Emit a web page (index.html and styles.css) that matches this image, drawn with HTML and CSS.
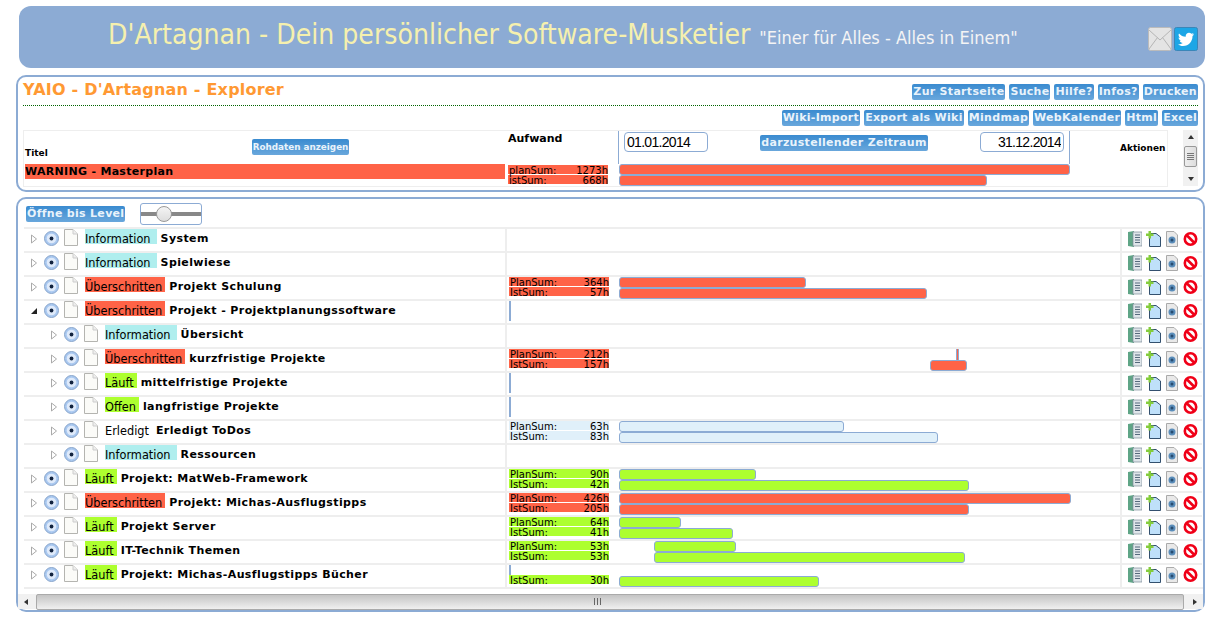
FILE: index.html
```html
<!DOCTYPE html>
<html lang="de">
<head>
    <meta charset="UTF-8">
    <title>YAIO - D'Artagnan - Explorer</title>
    <link rel="stylesheet" href="styles.css">
</head>
<body>

    <!-- Icons -->
    <svg class="sprite" width="0" height="0">
        <symbol id="i-closed" viewBox="0 0 8 10"><path d="M1.500 1 L6.500 5 L1.500 9 Z" fill="#fff" stroke="#aaa"/></symbol>
        <symbol id="i-open" viewBox="0 0 8 10"><path d="M1 8 L7 8 L7 2 Z" fill="#222"/></symbol>
        <symbol id="i-radio" viewBox="0 0 15 15"><circle cx="7.500" cy="7.500" r="7" fill="#a9c8f0" stroke="#8aa6cc"/><circle cx="7.500" cy="7.500" r="4.800" fill="#dfeafa"/><circle cx="7.500" cy="7.500" r="1.900" fill="#12233f"/></symbol>
        <symbol id="i-doc" viewBox="0 0 14 17"><path d="M.5 .5 H9 L13.500 5 V16.500 H.5 Z" fill="#fbfbf8" stroke="#b4b4b0"/><path d="M9 .5 V5 H13.500" fill="#eee" stroke="#ccc"/></symbol>
        <symbol id="i-book" viewBox="0 0 14 16"><path d="M0 1 L6 0 V16 L0 15 Z" fill="#5fa586"/><rect x="5" y="1" width="9" height="14" fill="#dfe5ea" stroke="#7d8c99" stroke-width=".7"/><path d="M7 4 H12 M7 6.500 H12 M7 9 H12 M7 11.500 H12" stroke="#55697c"/></symbol>
        <symbol id="i-new" viewBox="0 0 15 16"><path d="M3.500 2.500 H10 L14.500 6 V15.500 H3.500 Z" fill="#bfe0fa" stroke="#33506e"/><path d="M2.500 0 H5 V2.500 H7.500 V5 H5 V7.500 H2.500 V5 H0 V2.500 H2.500 Z" fill="#84cc3c"/></symbol>
        <symbol id="i-eye" viewBox="0 0 12 16"><path d="M.5 .5 H8 L11.500 4 V15.500 H.5 Z" fill="#e9e9e9" stroke="#aaa"/><circle cx="6" cy="9" r="3.500" fill="#5a8dba"/><circle cx="6" cy="9" r="1.500" fill="#274b6f"/></symbol>
        <symbol id="i-stop" viewBox="0 0 15 15"><circle cx="7.500" cy="7.500" r="5.700" fill="#fff" stroke="#f00018" stroke-width="2.600"/><path d="M3.500 3.500 L11.500 11.500" stroke="#f00018" stroke-width="2.600"/></symbol>
    </svg>

    <header class="site-head">
        <h1 class="site-title">D'Artagnan - Dein persönlicher Software-Musketier</h1>
        <span class="site-claim">"Einer für Alles - Alles in Einem"</span>
        <span class="site-icons">
            <svg class="social" viewBox="0 0 24 24"><rect x=".5" y=".5" width="23" height="23" rx="2" fill="#e4e4e4" stroke="#bbb"/><path d="M1 3 L12 13 L23 3 M1 22 L9.500 10.500 M23 22 L14.500 10.500" fill="none" stroke="#b5b5b5"/></svg>
            <svg class="social" viewBox="0 0 24 24"><rect x=".5" y=".5" width="23" height="23" rx="2" fill="#1da6e6" stroke="#3b86b8"/><path d="M20 7.200 c-.6.300-1.200.400-1.900.500 .7-.400 1.200-1 1.400-1.800 -.6.400-1.300.600-2.100.800 -.6-.600-1.500-1-2.400-1 -1.800 0-3.300 1.500-3.300 3.300 0 .300 0 .500.100.800 -2.700-.100-5.100-1.400-6.800-3.400 -.3.500-.4 1.100-.4 1.700 0 1.100.600 2.100 1.500 2.700 -.5 0-1-.200-1.500-.400 0 1.600 1.100 2.900 2.600 3.200 -.5.100-1 .200-1.500.100 .4 1.300 1.600 2.200 3.100 2.300 -1.400 1.100-3.200 1.600-4.900 1.400 1.500.900 3.200 1.500 5.100 1.500 6.100 0 9.500-5.100 9.500-9.500 v-.400 c.600-.500 1.200-1.100 1.600-1.800 z" fill="#fff"/></svg>
        </span>
    </header>

    <section class="box box-top">
        <div class="top-line">
            <h2 class="page-title">YAIO - D'Artagnan - Explorer</h2>
            <nav class="btn-row">
                <a class="btn">Zur Startseite</a>
                <a class="btn">Suche</a>
                <a class="btn">Hilfe?</a>
                <a class="btn">Infos?</a>
                <a class="btn">Drucken</a>
            </nav>
        </div>
        <nav class="btn-row btn-row-second">
            <a class="btn">Wiki-Import</a>
            <a class="btn">Export als Wiki</a>
            <a class="btn">Mindmap</a>
            <a class="btn">WebKalender</a>
            <a class="btn">Html</a>
            <a class="btn">Excel</a>
        </nav>

        <div class="master-wrap">
            <div class="master">
                <div class="master-head">
                    <div class="mh-title">
                        <span class="mh-label">Titel</span>
                        <a class="btn btn-small">Rohdaten anzeigen</a>
                    </div>
                    <div class="mh-sum">Aufwand</div>
                    <div class="mh-range">
                        <input class="date" type="text" value="01.01.2014">
                        <a class="btn">darzustellender Zeitraum</a>
                        <input class="date date-end" type="text" value="31.12.2014">
                    </div>
                    <div class="mh-actions">Aktionen</div>
                </div>
                <div class="master-body">
                    <div class="mb-title"><span>WARNING - Masterplan</span></div>
                    <div class="sum sum-master">
                        <div class="sum-line"><span>planSum:</span><span>1273h</span></div>
                        <div class="sum-line"><span>istSum:</span><span>668h</span></div>
                    </div>
                    <div class="gantt gantt-master">
                        <div class="bar red" style="margin-left: 0; width: 451px"></div>
                        <div class="bar red" style="margin-left: 0; width: 368px"></div>
                    </div>
                </div>
            </div>
            <div class="scroll-v">
                <span class="arrow-up"></span>
                <span class="thumb-v"></span>
                <span class="arrow-down"></span>
            </div>
        </div>
    </section>

    <section class="box box-tree">
        <div class="tree-tools">
            <a class="btn">Öffne bis Level</a>
            <div class="slider"><span class="knob"></span></div>
        </div>

        <div class="tree">
            <div class="row">
                <div class="name"><svg class="exp"><use href="#i-closed"/></svg><svg class="radio"><use href="#i-radio"/></svg><svg class="doc"><use href="#i-doc"/></svg><span class="status info">Information</span><b>System</b></div>
                <div class="sum"></div>
                <div class="gantt"></div>
                <div class="acts"><svg class="a1"><use href="#i-book"/></svg><svg class="a2"><use href="#i-new"/></svg><svg class="a3"><use href="#i-eye"/></svg><svg class="a4"><use href="#i-stop"/></svg></div>
            </div>
            <div class="row">
                <div class="name"><svg class="exp"><use href="#i-closed"/></svg><svg class="radio"><use href="#i-radio"/></svg><svg class="doc"><use href="#i-doc"/></svg><span class="status info">Information</span><b>Spielwiese</b></div>
                <div class="sum"></div>
                <div class="gantt"></div>
                <div class="acts"><svg class="a1"><use href="#i-book"/></svg><svg class="a2"><use href="#i-new"/></svg><svg class="a3"><use href="#i-eye"/></svg><svg class="a4"><use href="#i-stop"/></svg></div>
            </div>
            <div class="row">
                <div class="name"><svg class="exp"><use href="#i-closed"/></svg><svg class="radio"><use href="#i-radio"/></svg><svg class="doc"><use href="#i-doc"/></svg><span class="status late">Überschritten</span><b>Projekt Schulung</b></div>
                <div class="sum"><div class="sum-line red"><span>PlanSum:</span><span>364h</span></div><div class="sum-line red"><span>IstSum:</span><span>57h</span></div></div>
                <div class="gantt"><div class="bar red" style="margin-left: 0; width: 187px"></div><div class="bar red" style="margin-left: 0; width: 308px"></div></div>
                <div class="acts"><svg class="a1"><use href="#i-book"/></svg><svg class="a2"><use href="#i-new"/></svg><svg class="a3"><use href="#i-eye"/></svg><svg class="a4"><use href="#i-stop"/></svg></div>
            </div>
            <div class="row">
                <div class="name"><svg class="exp"><use href="#i-open"/></svg><svg class="radio"><use href="#i-radio"/></svg><svg class="doc"><use href="#i-doc"/></svg><span class="status late">Überschritten</span><b>Projekt - Projektplanungssoftware</b></div>
                <div class="sum"><span class="tick"></span></div>
                <div class="gantt"></div>
                <div class="acts"><svg class="a1"><use href="#i-book"/></svg><svg class="a2"><use href="#i-new"/></svg><svg class="a3"><use href="#i-eye"/></svg><svg class="a4"><use href="#i-stop"/></svg></div>
            </div>
            <div class="row">
                <div class="name sub"><svg class="exp"><use href="#i-closed"/></svg><svg class="radio"><use href="#i-radio"/></svg><svg class="doc"><use href="#i-doc"/></svg><span class="status info">Information</span><b>Übersicht</b></div>
                <div class="sum"></div>
                <div class="gantt"></div>
                <div class="acts"><svg class="a1"><use href="#i-book"/></svg><svg class="a2"><use href="#i-new"/></svg><svg class="a3"><use href="#i-eye"/></svg><svg class="a4"><use href="#i-stop"/></svg></div>
            </div>
            <div class="row">
                <div class="name sub"><svg class="exp"><use href="#i-closed"/></svg><svg class="radio"><use href="#i-radio"/></svg><svg class="doc"><use href="#i-doc"/></svg><span class="status late">Überschritten</span><b>kurzfristige Projekte</b></div>
                <div class="sum"><div class="sum-line red"><span>PlanSum:</span><span>212h</span></div><div class="sum-line red"><span>IstSum:</span><span>157h</span></div></div>
                <div class="gantt"><div class="bar bar-thin red" style="margin-left: 337px; width: 3px"></div><div class="bar red" style="margin-left: 311px; width: 37px"></div></div>
                <div class="acts"><svg class="a1"><use href="#i-book"/></svg><svg class="a2"><use href="#i-new"/></svg><svg class="a3"><use href="#i-eye"/></svg><svg class="a4"><use href="#i-stop"/></svg></div>
            </div>
            <div class="row">
                <div class="name sub"><svg class="exp"><use href="#i-closed"/></svg><svg class="radio"><use href="#i-radio"/></svg><svg class="doc"><use href="#i-doc"/></svg><span class="status run">Läuft</span><b>mittelfristige Projekte</b></div>
                <div class="sum"><span class="tick"></span></div>
                <div class="gantt"></div>
                <div class="acts"><svg class="a1"><use href="#i-book"/></svg><svg class="a2"><use href="#i-new"/></svg><svg class="a3"><use href="#i-eye"/></svg><svg class="a4"><use href="#i-stop"/></svg></div>
            </div>
            <div class="row">
                <div class="name sub"><svg class="exp"><use href="#i-closed"/></svg><svg class="radio"><use href="#i-radio"/></svg><svg class="doc"><use href="#i-doc"/></svg><span class="status run">Offen</span><b>langfristige Projekte</b></div>
                <div class="sum"><span class="tick"></span></div>
                <div class="gantt"></div>
                <div class="acts"><svg class="a1"><use href="#i-book"/></svg><svg class="a2"><use href="#i-new"/></svg><svg class="a3"><use href="#i-eye"/></svg><svg class="a4"><use href="#i-stop"/></svg></div>
            </div>
            <div class="row">
                <div class="name sub"><svg class="exp"><use href="#i-closed"/></svg><svg class="radio"><use href="#i-radio"/></svg><svg class="doc"><use href="#i-doc"/></svg><span class="status done">Erledigt</span><b>Erledigt ToDos</b></div>
                <div class="sum"><div class="sum-line pale"><span>PlanSum:</span><span>63h</span></div><div class="sum-line pale"><span>IstSum:</span><span>83h</span></div></div>
                <div class="gantt"><div class="bar pale" style="margin-left: 0; width: 225px"></div><div class="bar pale" style="margin-left: 0; width: 319px"></div></div>
                <div class="acts"><svg class="a1"><use href="#i-book"/></svg><svg class="a2"><use href="#i-new"/></svg><svg class="a3"><use href="#i-eye"/></svg><svg class="a4"><use href="#i-stop"/></svg></div>
            </div>
            <div class="row">
                <div class="name sub"><svg class="exp"><use href="#i-closed"/></svg><svg class="radio"><use href="#i-radio"/></svg><svg class="doc"><use href="#i-doc"/></svg><span class="status info">Information</span><b>Ressourcen</b></div>
                <div class="sum"></div>
                <div class="gantt"></div>
                <div class="acts"><svg class="a1"><use href="#i-book"/></svg><svg class="a2"><use href="#i-new"/></svg><svg class="a3"><use href="#i-eye"/></svg><svg class="a4"><use href="#i-stop"/></svg></div>
            </div>
            <div class="row">
                <div class="name"><svg class="exp"><use href="#i-closed"/></svg><svg class="radio"><use href="#i-radio"/></svg><svg class="doc"><use href="#i-doc"/></svg><span class="status run">Läuft</span><b>Projekt: MatWeb-Framework</b></div>
                <div class="sum"><div class="sum-line green"><span>PlanSum:</span><span>90h</span></div><div class="sum-line green"><span>IstSum:</span><span>42h</span></div></div>
                <div class="gantt"><div class="bar green" style="margin-left: 0; width: 137px"></div><div class="bar green" style="margin-left: 0; width: 350px"></div></div>
                <div class="acts"><svg class="a1"><use href="#i-book"/></svg><svg class="a2"><use href="#i-new"/></svg><svg class="a3"><use href="#i-eye"/></svg><svg class="a4"><use href="#i-stop"/></svg></div>
            </div>
            <div class="row">
                <div class="name"><svg class="exp"><use href="#i-closed"/></svg><svg class="radio"><use href="#i-radio"/></svg><svg class="doc"><use href="#i-doc"/></svg><span class="status late">Überschritten</span><b>Projekt: Michas-Ausflugstipps</b></div>
                <div class="sum"><div class="sum-line red"><span>PlanSum:</span><span>426h</span></div><div class="sum-line red"><span>IstSum:</span><span>205h</span></div></div>
                <div class="gantt"><div class="bar red" style="margin-left: 0; width: 452px"></div><div class="bar red" style="margin-left: 0; width: 350px"></div></div>
                <div class="acts"><svg class="a1"><use href="#i-book"/></svg><svg class="a2"><use href="#i-new"/></svg><svg class="a3"><use href="#i-eye"/></svg><svg class="a4"><use href="#i-stop"/></svg></div>
            </div>
            <div class="row">
                <div class="name"><svg class="exp"><use href="#i-closed"/></svg><svg class="radio"><use href="#i-radio"/></svg><svg class="doc"><use href="#i-doc"/></svg><span class="status run">Läuft</span><b>Projekt Server</b></div>
                <div class="sum"><div class="sum-line green"><span>PlanSum:</span><span>64h</span></div><div class="sum-line green"><span>IstSum:</span><span>41h</span></div></div>
                <div class="gantt"><div class="bar green" style="margin-left: 0; width: 62px"></div><div class="bar green" style="margin-left: 0; width: 114px"></div></div>
                <div class="acts"><svg class="a1"><use href="#i-book"/></svg><svg class="a2"><use href="#i-new"/></svg><svg class="a3"><use href="#i-eye"/></svg><svg class="a4"><use href="#i-stop"/></svg></div>
            </div>
            <div class="row">
                <div class="name"><svg class="exp"><use href="#i-closed"/></svg><svg class="radio"><use href="#i-radio"/></svg><svg class="doc"><use href="#i-doc"/></svg><span class="status run">Läuft</span><b>IT-Technik Themen</b></div>
                <div class="sum"><div class="sum-line green"><span>PlanSum:</span><span>53h</span></div><div class="sum-line green"><span>IstSum:</span><span>53h</span></div></div>
                <div class="gantt"><div class="bar green" style="margin-left: 35px; width: 82px"></div><div class="bar green" style="margin-left: 35px; width: 311px"></div></div>
                <div class="acts"><svg class="a1"><use href="#i-book"/></svg><svg class="a2"><use href="#i-new"/></svg><svg class="a3"><use href="#i-eye"/></svg><svg class="a4"><use href="#i-stop"/></svg></div>
            </div>
            <div class="row">
                <div class="name"><svg class="exp"><use href="#i-closed"/></svg><svg class="radio"><use href="#i-radio"/></svg><svg class="doc"><use href="#i-doc"/></svg><span class="status run">Läuft</span><b>Projekt: Michas-Ausflugstipps Bücher</b></div>
                <div class="sum"><span class="tick tick-short"></span><div class="sum-line green"><span>IstSum:</span><span>30h</span></div></div>
                <div class="gantt gantt-bottom"><div class="bar green" style="margin-left: 0; width: 200px"></div></div>
                <div class="acts"><svg class="a1"><use href="#i-book"/></svg><svg class="a2"><use href="#i-new"/></svg><svg class="a3"><use href="#i-eye"/></svg><svg class="a4"><use href="#i-stop"/></svg></div>
            </div>
        </div>

        <div class="scroll-h">
            <span class="arrow-left"></span>
            <span class="thumb-h"><span class="grip"></span></span>
            <span class="arrow-right"></span>
        </div>
    </section>

</body>
</html>
```

FILE: styles.css
```css
body {
    margin: 0;
    background-color: #fff;
    color: #000;
    font-family: "DejaVu Sans", Verdana, sans-serif;
    font-size: 11px;
}
.sprite {
    position: absolute;
}

/* Kopfzeile */
.site-head {
    display: flex;
    align-items: center;
    height: 62px;
    margin: 6px 10px 7px 19px;
    padding-left: 89px;
    background-color: #8cabd4;
    border-radius: 12px;
}
.site-title {
    margin: 0 9px 5px 0;
    font-size: 28.100px;
    font-weight: normal;
    font-stretch: condensed;
    color: #f5f0ae;
}
.site-claim {
    margin-top: 1px;
    font-size: 18px;
    font-stretch: condensed;
    color: #f4f4f4;
}
.site-icons {
    display: flex;
    gap: 2px;
    margin-left: auto;
    margin-right: 7px;
    margin-top: 4px;
}
.social {
    width: 24px;
    height: 24px;
}

/* Boxen */
.box {
    margin: 0 10px 5px 16px;
    border: 2px solid #8cabd4;
    border-radius: 10px;
    background-color: #fff;
}
.box-top {
    height: 113px;
    padding: 0 5px;
}
.box-tree {
    height: 411px;
    padding: 0 0 0 6px;
}

/* Buttons */
.btn {
    display: inline-block;
    height: 16px;
    padding: 0 1px;
    border-radius: 2px;
    background: linear-gradient(#3a8bd0, #69a7dc);
    color: #e9f3fb;
    font-size: 11px;
    font-weight: bold;
    letter-spacing: .3px;
    line-height: 16px;
    white-space: nowrap;
}
.btn-small {
    font-size: 8.800px;
    letter-spacing: 0;
}
.btn-row {
    display: flex;
    justify-content: flex-end;
    gap: 4px;
}
.btn-row-second {
    margin-top: 4px;
}

/* Obere Box */
.top-line {
    display: flex;
    justify-content: space-between;
    align-items: flex-end;
    height: 27px;
    border-bottom: 1px dotted #006400;
    padding-bottom: 1px;
}
.page-title {
    margin: 0 0 5px;
    color: #ff9933;
    font-size: 16px;
    font-weight: bold;
    letter-spacing: .2px;
}
.top-line .btn-row {
    margin-bottom: 4px;
}
.master-wrap {
    display: flex;
    margin-top: 4px;
}
.master {
    width: 1143px;
    height: 55px;
    border: 1px solid #eee;
}
.master-head {
    display: flex;
    height: 33px;
}
.mh-title {
    display: flex;
    width: 484px;
    padding-left: 1px;
    box-sizing: border-box;
}
.mh-label {
    margin-top: 17px;
    font-size: 9px;
    font-weight: bold;
}
.mh-title .btn-small {
    margin: 8px 0 0 204px;
    height: 16px;
    line-height: 16px;
}
.mh-sum {
    width: 110px;
    margin-top: 1px;
    font-size: 11px;
    font-weight: bold;
}
.mh-range {
    display: flex;
    justify-content: space-between;
    align-items: flex-start;
    box-sizing: border-box;
    width: 452px;
    padding: 1px 5px 0;
    border-left: 1px solid #8cabd4;
    border-right: 1px solid #8cabd4;
}
.mh-range .btn {
    margin-top: 3px;
}
.date {
    box-sizing: border-box;
    width: 84px;
    height: 20px;
    padding: 0 2px;
    border: 1px solid #8cabd4;
    border-radius: 4px;
    font-family: "Liberation Sans", sans-serif;
    font-size: 14px;
    letter-spacing: -.7px;
}
.date-end {
    text-align: right;
}
.mh-actions {
    margin: 12px 0 0 50px;
    font-size: 9px;
    font-weight: bold;
}
.master-body {
    display: flex;
}
.mb-title {
    width: 481px;
    margin-right: 2px;
}
.mb-title span {
    display: block;
    height: 15px;
    margin-left: 1px;
    background-color: #ff6347;
    font-weight: bold;
    letter-spacing: .3px;
    line-height: 15px;
}
.scroll-v {
    display: flex;
    flex-direction: column;
    align-items: center;
    justify-content: space-between;
    width: 15px;
    height: 56px;
    margin-left: 15px;
    padding: 5px 0;
    box-sizing: border-box;
    background-color: #f1f1f1;
}
.thumb-v {
    width: 13px;
    height: 21px;
    margin-bottom: 3px;
    border: 1px solid #999;
    border-radius: 2px;
    box-sizing: border-box;
    background:
        repeating-linear-gradient(#777 0 1px, transparent 1px 2px) center / 7px 7px no-repeat,
        linear-gradient(to right, #eee, #ddd);
}
.arrow-up {
    border: 3px solid transparent;
    border-bottom: 4px solid #333;
    border-top: 0;
}
.arrow-down {
    border: 3px solid transparent;
    border-top: 4px solid #333;
    border-bottom: 0;
}

/* Baum */
.tree-tools {
    display: flex;
    align-items: center;
    gap: 15px;
    height: 27px;
    padding: 1px 0 0 2px;
}
.tree-tools .btn {
    margin-top: 1px;
}
.slider {
    position: relative;
    box-sizing: border-box;
    width: 62px;
    height: 22px;
    border: 1px solid #8cabd4;
    border-radius: 3px;
    background: linear-gradient(#fff 8px, #888 8px, #888 12px, #fff 12px);
}
.knob {
    position: absolute;
    left: 15px;
    top: 2px;
    box-sizing: border-box;
    width: 16px;
    height: 16px;
    border: 1px solid #999;
    border-radius: 50%;
    background: linear-gradient(#f4f4f4, #ddd);
}
.tree {
    border-bottom: 2px solid #eee;
}
.row {
    display: flex;
    box-sizing: border-box;
    width: 1178px;
    height: 24px;
    border-top: 2px solid #eee;
}
.name {
    display: flex;
    align-items: flex-start;
    box-sizing: border-box;
    width: 483px;
    padding-left: 6px;
    border-right: 2px solid #eee;
}
.name.sub {
    padding-left: 26px;
}
.name svg {
    flex: none;
}
.exp {
    width: 8px;
    height: 10px;
    margin: 5px 6px 0 0;
}
.radio {
    width: 15px;
    height: 15px;
    margin: 2px 5px 0 0;
}
.doc {
    width: 14px;
    height: 17px;
    margin-right: 7px;
}
.status {
    height: 15px;
    margin: 0 4px 0 0;
    padding: 0 3px 0 0;
    font-size: 12.600px;
    font-stretch: condensed;
    line-height: 19px;
}
.status.info {
    padding-right: 6px;
}
.name b {
    font-size: 11px;
    letter-spacing: .4px;
    line-height: 19px;
}
.info {
    background-color: #afeeee;
}
.late {
    background-color: #ff6347;
}
.run {
    background-color: #adff2f;
}
.done {
    background-color: #fff;
}

/* Aufwand */
.sum {
    box-sizing: border-box;
    width: 112px;
    padding: 0 0 0 2px;
    font-size: 10px;
}
.sum-master {
    height: 20px;
    padding: 1px 0 0 1px;
}
.sum-line {
    display: flex;
    justify-content: space-between;
    box-sizing: border-box;
    width: 100px;
    height: 9px;
    margin-bottom: 1px;
    padding: 0 0 0 1px;
    line-height: 11px;
}
.sum-master .sum-line {
    background-color: #ff6347;
}
.red {
    background-color: #ff6347;
}
.green {
    background-color: #adff2f;
}
.pale {
    background-color: #e0f0fa;
}
.tick {
    display: block;
    width: 2px;
    height: 20px;
    background-color: #8cabd4;
}
.tick-short {
    height: 10px;
}

/* Gantt */
.gantt {
    box-sizing: border-box;
    width: 503px;
    border-right: 2px solid #eee;
}
.gantt-master {
    border-right: 0;
}
.gantt-bottom {
    padding-top: 11px;
}
.bar {
    box-sizing: border-box;
    height: 11px;
    border: 1px solid #8cabd4;
    border-radius: 3px;
}
.bar-thin {
    border-width: 0 1px;
    border-radius: 0;
}

/* Aktionen */
.acts {
    display: flex;
    align-items: flex-start;
    padding: 2px 0 0 6px;
}
.acts svg {
    height: 16px;
}
.a1 {
    width: 14px;
    margin-right: 4px;
}
.a2 {
    width: 15px;
    margin-right: 5px;
}
.a3 {
    width: 12px;
    margin-right: 5px;
}
.a4 {
    width: 15px;
}

/* Scrollbar unten */
.scroll-h {
    display: flex;
    align-items: center;
    height: 15px;
    margin: 5px 0 0 -6px;
    background-color: #f1f1f1;
}
.thumb-h {
    display: flex;
    align-items: center;
    justify-content: center;
    flex: 1;
    height: 14px;
    margin: 0 9px 0 8px;
    border: 1px solid #aaa;
    border-radius: 2px;
    background: linear-gradient(#c4c4c4, #f0f0f0);
}
.grip {
    width: 7px;
    height: 7px;
    margin-left: -26px;
    background: repeating-linear-gradient(to right, #666 0 1px, transparent 1px 3px);
}
.arrow-left {
    margin-left: 6px;
    border: 3px solid transparent;
    border-right: 4px solid #333;
    border-left: 0;
}
.arrow-right {
    margin-right: 6px;
    border: 3px solid transparent;
    border-left: 4px solid #333;
    border-right: 0;
}
```
